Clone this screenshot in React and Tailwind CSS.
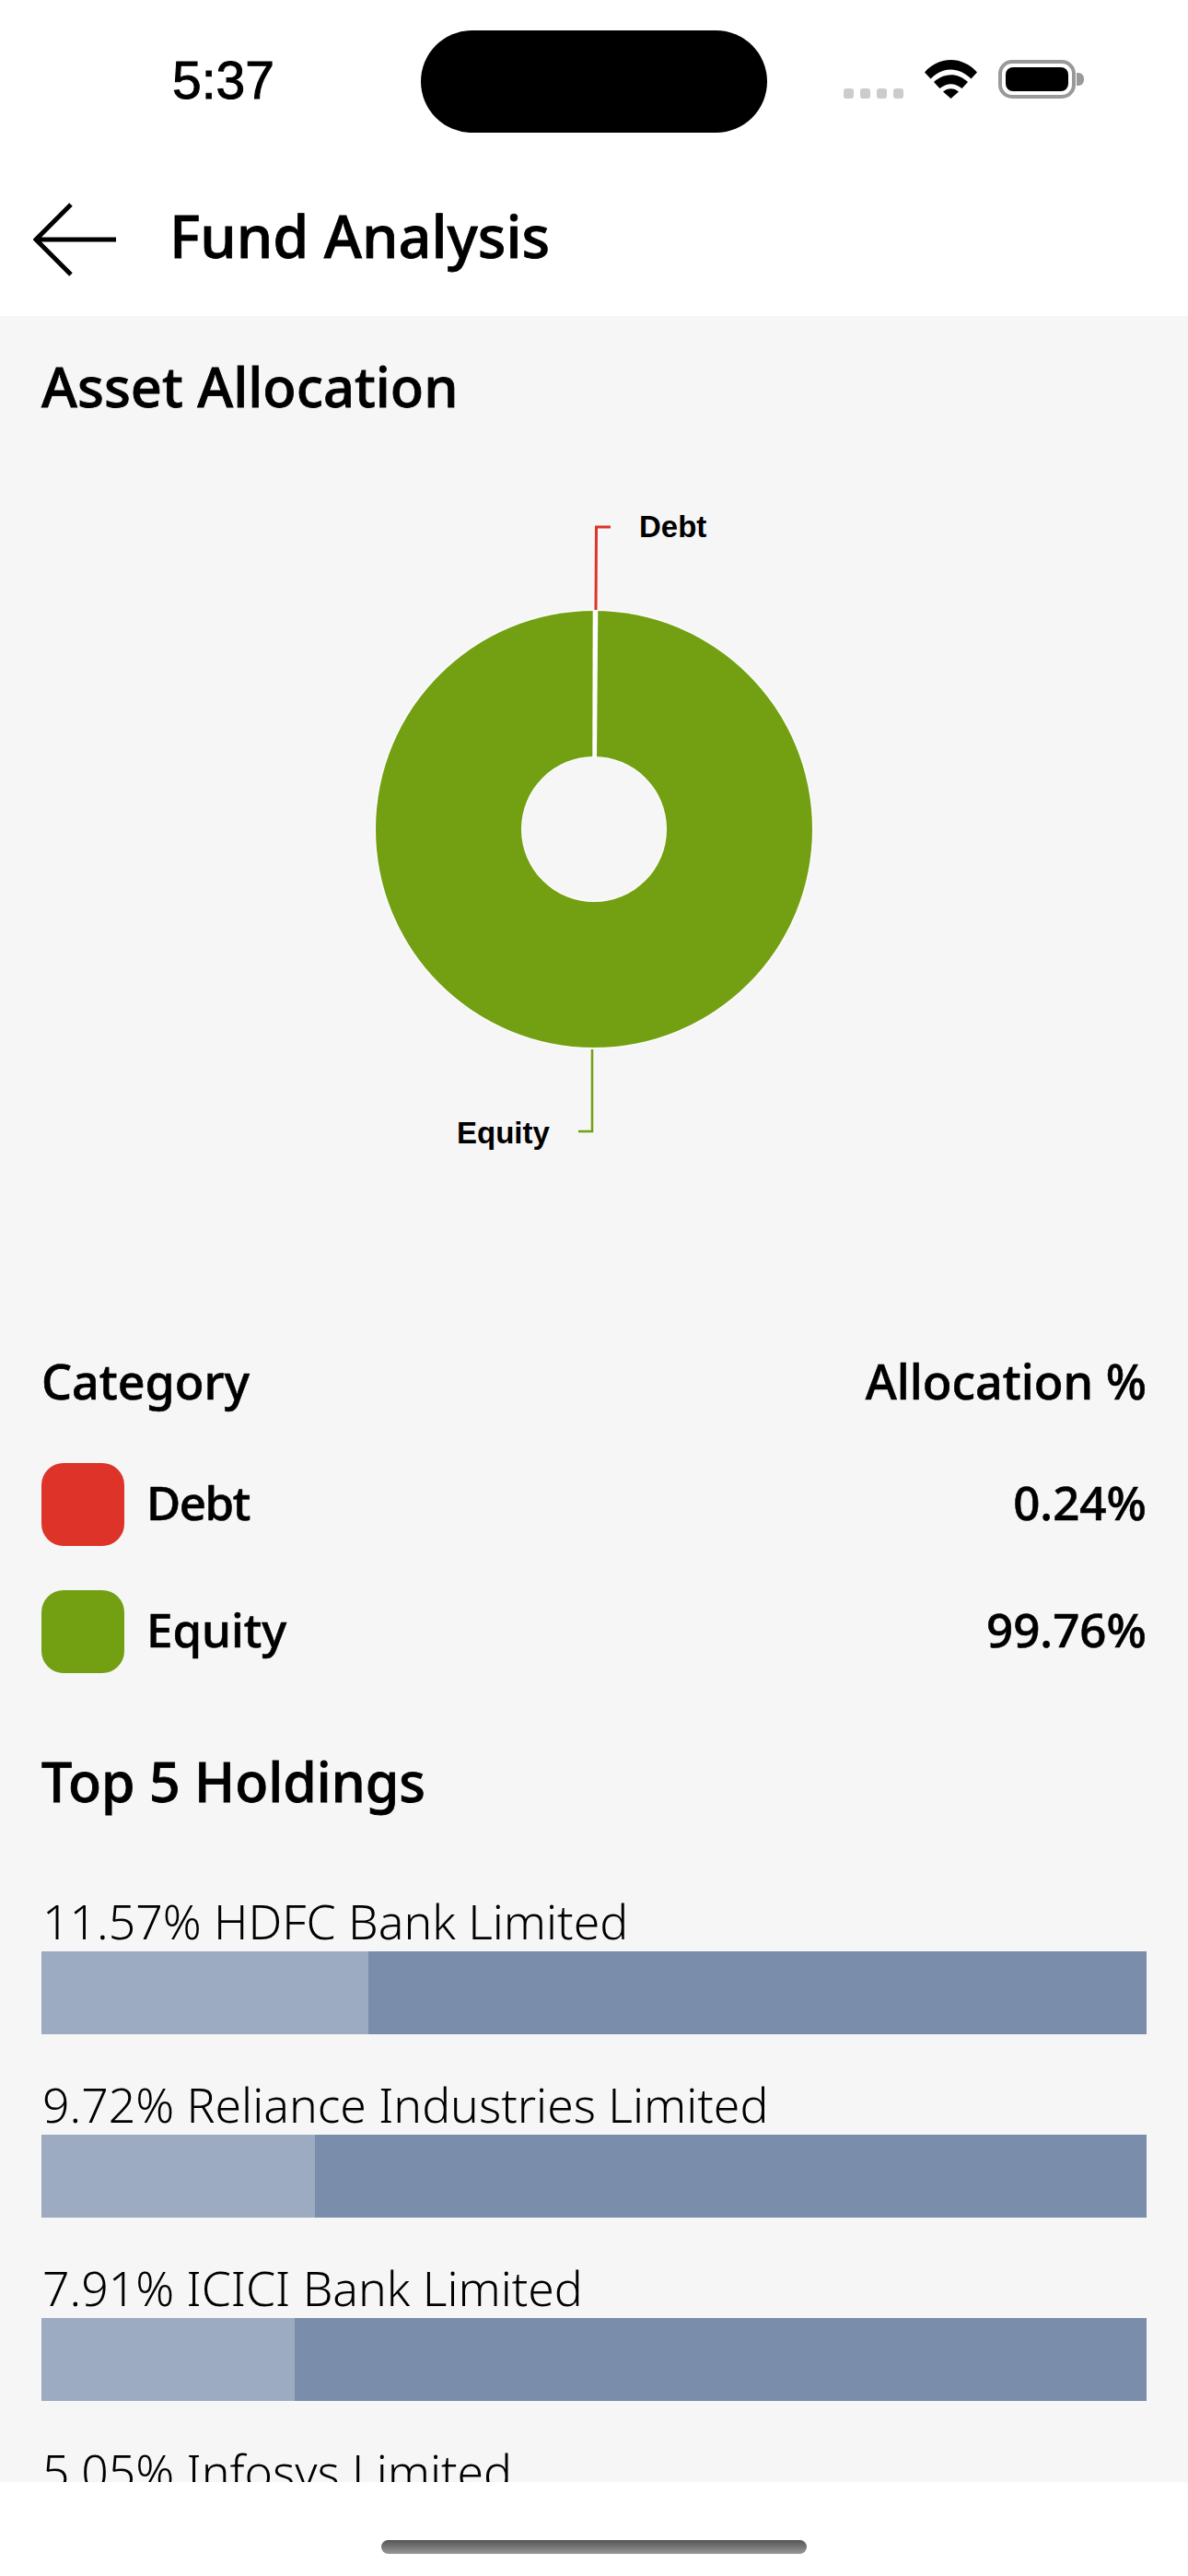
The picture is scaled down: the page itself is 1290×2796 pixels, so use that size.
import React from "react";

const holdings = [
  { label: "11.57% HDFC Bank Limited", w: 355 },
  { label: "9.72% Reliance Industries Limited", w: 297 },
  { label: "7.91% ICICI Bank Limited", w: 275 },
];

function Wifi() {
  return (
    <svg width="57" height="42" viewBox="0 0 57 42" className="block">
      <path d="M0 13.5 C16 -4.5 41 -4.5 57 13.5 L50.5 20.5 C37 7 20 7 6.5 20.5 Z" fill="#000" />
      <path d="M10 24 C21 13.5 36 13.5 47 24 L40.5 31 C33 24.5 24 24.5 16.5 31 Z" fill="#000" />
      <path d="M20 34.5 C25 30 32 30 37 34.5 L28.5 42 Z" fill="#000" />
    </svg>
  );
}

function Battery() {
  return (
    <div className="flex items-center">
      <div className="w-[84px] h-[42px] rounded-[15px] border-[4px] border-[#999999] p-[4px]">
        <div className="w-full h-full rounded-[8px] bg-black" />
      </div>
      <div className="w-[8px] h-[14px] ml-[1px] rounded-r-[6px] bg-[#999999]" />
    </div>
  );
}

function Donut() {
  return (
    <svg width="1290" height="760" viewBox="0 0 1290 760" className="block mt-[62px]">
      <circle cx="645" cy="379" r="238.5" fill="#ffffff" opacity="0.7" />
      <circle cx="645" cy="379" r="237" fill="#72a012" />
      <circle cx="645" cy="379" r="79" fill="#ffffff" />
      <circle cx="645" cy="379" r="78" fill="#f6f6f6" />
      <path d="M643.7 141 L649.3 141 L648 301 L643.3 301 Z" fill="#ffffff" />
      <path d="M647 141 L647.5 51 L663 51" fill="none" stroke="#dd3329" strokeWidth="3" />
      <path d="M643 618 L643 707 L628 707" fill="none" stroke="#72a012" strokeWidth="2.5" />
      <text x="694" y="62" fontFamily="'Liberation Sans', Arial, sans-serif" fontWeight="700" fontSize="33" fill="#000">Debt</text>
      <text x="496" y="720" fontFamily="'Liberation Sans', Arial, sans-serif" fontWeight="700" fontSize="33" fill="#000">Equity</text>
    </svg>
  );
}

export default function App() {
  return (
    <div className="w-[1290px] h-[2796px] flex flex-col bg-white text-black overflow-hidden font-['Noto_Sans',sans-serif]">
      <div className="relative h-[172px] shrink-0">
        <div className="absolute left-[457px] top-[33px] w-[376px] h-[111px] rounded-[56px] bg-black" />
        <div className="flex items-start h-full">
          <span className="ml-[187px] mt-[52px] text-[57px] leading-[70px] font-normal [-webkit-text-stroke:1px_#000] font-['Liberation_Sans',sans-serif]">5:37</span>
          <div className="ml-auto mr-[113px] mt-[65px] flex items-end">
            <div className="flex gap-[7px] mr-[23px]">
              <i className="block w-[11px] h-[11px] rounded-[3px] bg-[#cccccc]" />
              <i className="block w-[11px] h-[11px] rounded-[3px] bg-[#cccccc]" />
              <i className="block w-[11px] h-[11px] rounded-[3px] bg-[#cccccc]" />
              <i className="block w-[11px] h-[11px] rounded-[3px] bg-[#cccccc]" />
            </div>
            <Wifi />
            <div className="ml-[23px]"><Battery /></div>
          </div>
        </div>
      </div>

      <div className="h-[171px] shrink-0 flex items-start">
        <svg width="92" height="80" viewBox="0 0 92 80" className="ml-[36px] mt-[48px] block">
          <path d="M41 2 L3 40 L41 78 M3 40 L90 40" fill="none" stroke="#000" strokeWidth="5" />
        </svg>
        <h1 className="ml-[56px] mt-[44px] text-[63px] leading-[80px] font-medium [-webkit-text-stroke:0.8px_#000]">Fund Analysis</h1>
      </div>

      <main className="flex-1 min-h-0 overflow-hidden bg-[#f6f6f6]">
        <h2 className="ml-[45px] mt-[36px] text-[59.5px] leading-[80px] font-medium [-webkit-text-stroke:0.8px_#000]">Asset Allocation</h2>

        <Donut />

        <div className="px-[45px] mt-[182px]">
          <div className="flex justify-between text-[52px] leading-[72px] font-medium [-webkit-text-stroke:0.6px_#000]">
            <span>Category</span>
            <span>Allocation %</span>
          </div>
          <div className="mt-[53px] flex items-center justify-between h-[90px] text-[51px] font-medium [-webkit-text-stroke:0.6px_#000]">
            <div className="flex items-center gap-[24px]">
              <div className="w-[90px] h-[90px] rounded-[24px] bg-[#dd3329]" />
              <span className="-mt-[5px] tracking-[-1.5px]">Debt</span>
            </div>
            <span className="-mt-[5px]">0.24%</span>
          </div>
          <div className="mt-[48px] flex items-center justify-between h-[90px] text-[51px] font-medium [-webkit-text-stroke:0.6px_#000]">
            <div className="flex items-center gap-[24px]">
              <div className="w-[90px] h-[90px] rounded-[24px] bg-[#72a012]" />
              <span className="-mt-[5px]">Equity</span>
            </div>
            <span className="-mt-[5px]">99.76%</span>
          </div>

          <h2 className="mt-[77px] text-[59px] leading-[80px] font-medium [-webkit-text-stroke:0.8px_#000]">Top 5 Holdings</h2>

          <div className="mt-[73px] w-[1200px] flex flex-col gap-[37px]">
            {holdings.map((h) => (
              <div key={h.label}>
                <div className="h-[72px] pl-[1px] text-[51.7px] leading-[78px] font-light">{h.label}</div>
                <div className="h-[90px] bg-[#7a8daa]">
                  <div className="h-full bg-[#9dabc2]" style={{ width: h.w }} />
                </div>
              </div>
            ))}
            <div className="h-[72px] pl-[1px] text-[51.7px] leading-[78px] font-light">5.05% Infosys Limited</div>
          </div>
        </div>
      </main>

      <div className="h-[102px] shrink-0 bg-white flex justify-center pt-[63px]">
        <div className="w-[462px] h-[15px] rounded-[8px] bg-linear-to-b from-[#555555] to-[#999999]" />
      </div>
    </div>
  );
}
